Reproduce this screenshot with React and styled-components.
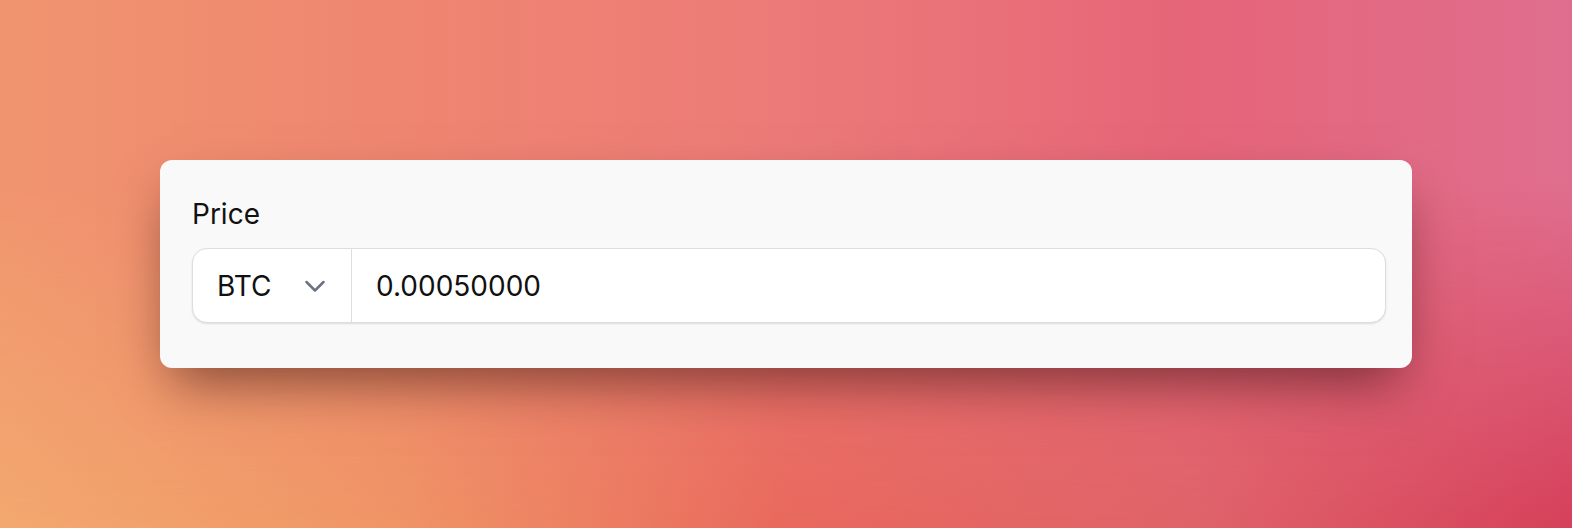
import React, { useState } from 'react';
import styled, { createGlobalStyle } from 'styled-components';

const GlobalStyle = createGlobalStyle`
  html, body {
    margin: 0;
    padding: 0;
  }
  body {
    font-family: Inter, "Noto Sans", "Liberation Sans", sans-serif;
    -webkit-font-smoothing: antialiased;
  }
`;

const Page = styled.div`
  position: relative;
  min-height: 528px;
  display: flex;
  align-items: center;
  justify-content: center;
  background: linear-gradient(
    to right,
    #f3a96f 0%,
    #f09566 25%,
    #e9695d 50%,
    #e0636a 76%,
    #d6405a 100%
  );
  overflow: hidden;

  &::before {
    content: '';
    position: absolute;
    inset: 0;
    background: linear-gradient(
      to right,
      #f0946f 0%,
      #ef8670 25%,
      #ec7a78 50%,
      #e66579 76%,
      #df6e8e 100%
    );
    -webkit-mask-image: linear-gradient(to bottom, #000 0%, #000 35%, transparent 100%);
    mask-image: linear-gradient(to bottom, #000 0%, #000 35%, transparent 100%);
  }
`;

const Card = styled.div`
  position: relative;
  width: 1252px;
  box-sizing: border-box;
  padding: 38px 26px 45px 32px;
  background: #f9f9f9;
  border-radius: 12px;
  box-shadow: 0 25px 50px -12px rgba(40, 10, 10, 0.55);
`;

const Label = styled.label`
  display: block;
  font-size: 28px;
  line-height: 32px;
  font-weight: 400;
  color: #111;
  margin-bottom: 18px;
`;

const Field = styled.div`
  display: flex;
  align-items: stretch;
  height: 75px;
  box-sizing: border-box;
  background: #fff;
  border: 1.5px solid #dedede;
  border-radius: 15px;
  box-shadow: 0 1px 2px rgba(0, 0, 0, 0.12);
  overflow: hidden;
`;

const Currency = styled.button`
  display: flex;
  align-items: center;
  justify-content: space-between;
  width: 159px;
  box-sizing: border-box;
  padding: 0 24px 0 24px;
  border: 0;
  border-right: 1.5px solid #dedede;
  background: transparent;
  font-family: inherit;
  font-size: 28px;
  color: #111;
  cursor: pointer;
`;

const Chevron = styled.svg`
  width: 24px;
  height: 24px;
  color: #6b7280;
`;

const Amount = styled.input`
  flex: 1;
  min-width: 0;
  border: 0;
  outline: none;
  padding: 0 24px;
  background: transparent;
  font-family: inherit;
  font-size: 28px;
  color: #111;
`;

export default function App() {
  const [value, setValue] = useState('0.00050000');

  return (
    <>
      <GlobalStyle />
      <Page>
        <Card>
          <Label htmlFor="price">Price</Label>
          <Field>
            <Currency type="button">
              BTC
              <Chevron viewBox="0 0 24 24" fill="none" stroke="currentColor" strokeWidth="2.5" strokeLinecap="round" strokeLinejoin="round">
                <path d="M3.5 8 L12 16.5 L20.5 8" />
              </Chevron>
            </Currency>
            <Amount id="price" value={value} onChange={(e) => setValue(e.target.value)} />
          </Field>
        </Card>
      </Page>
    </>
  );
}
